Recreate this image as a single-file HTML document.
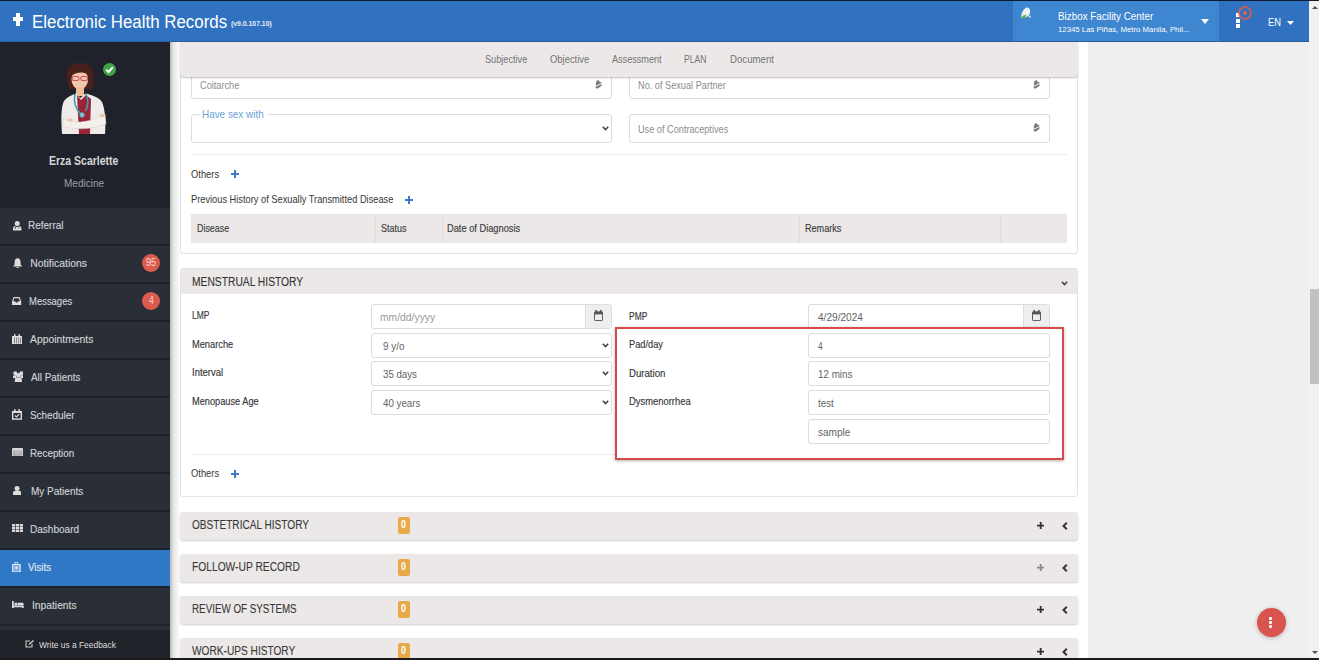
<!DOCTYPE html>
<html><head><meta charset="utf-8">
<style>
*{box-sizing:border-box;margin:0;padding:0}
html,body{width:1319px;height:660px;overflow:hidden;background:#efefef;font-family:"Liberation Sans",sans-serif}
.a{position:absolute}
.t{position:absolute;line-height:1;white-space:nowrap}
.gray{background:#ebe8e7}
.inp{position:absolute;background:#fff;border:1px solid #dcdcdc;border-radius:3px}
</style></head>
<body>
<div class="a" style="left:0;top:0;width:1319px;height:1px;background:#0b1b33"></div>
<div class="a" style="left:0;top:1px;width:1309px;height:41px;background:#3172c0"></div>
<div class="a" style="left:1013px;top:1px;width:206px;height:40px;background:#3f86d0"></div>
<div class="a" style="left:0;top:41px;width:1309px;height:1px;background:#285f9f"></div>
<svg class="a" style="left:13px;top:13px" width="10" height="13" viewBox="0 0 10 13"><path d="M3 0h4v4h3v4H7v5H3V8H0V4h3z" fill="#fff"/></svg>
<div class="t" style="left:31.8px;top:12.60px;font-size:18.12px;color:#fff;transform:scaleX(0.932);transform-origin:0 0;">Electronic Health Records</div>
<div class="t" style="left:231.2px;top:20.73px;font-size:6.67px;color:#e8eef8;font-weight:bold;transform:scaleX(1.029);transform-origin:0 0;">(v9.0.107.10)</div>
<svg class="a" style="left:1019.5px;top:6.9px" width="11" height="11" viewBox="0 0 11 11"><path d="M1 10.5 C1.5 6 3.5 1 7 0.5 C9.5 0.5 10.5 3 10 6 C9.5 8 8 9.5 5 10.8 Z" fill="#edf2f7"/><path d="M0.8 10.8 C2 8.6 4 7.6 6.2 8 C6.6 9 6 10.2 5 10.9 Z" fill="#62b544"/><circle cx="9.8" cy="9.6" r="1.1" fill="#d8ecf8"/></svg>
<div class="t" style="left:1057.7px;top:9.62px;font-size:11.74px;color:#fff;transform:scaleX(0.840);transform-origin:0 0;">Bizbox Facility Center</div>
<div class="t" style="left:1057.7px;top:26.10px;font-size:8.12px;color:#fff;transform:scaleX(0.962);transform-origin:0 0;">12345 Las Piñas, Metro Manila, Phil...</div>
<svg class="a" style="left:1201px;top:19px" width="8" height="5" viewBox="0 0 8 5"><path d="M0 0h8L4 5z" fill="#fff"/></svg>
<div class="a" style="left:1236px;top:13px;width:4px;height:4px;background:#fff"></div>
<div class="a" style="left:1236px;top:19px;width:4px;height:4px;background:#fff"></div>
<div class="a" style="left:1236px;top:24px;width:4px;height:4px;background:#fff"></div>
<div class="a" style="left:1238px;top:5.5px;width:14px;height:14px;border-radius:50%;border:2px solid rgba(222,90,80,0.85)"></div>
<div class="a" style="left:1243px;top:10.5px;width:4px;height:4px;border-radius:50%;background:#e8604a"></div>
<div class="t" style="left:1267.6px;top:18.25px;font-size:10.29px;color:#fff;transform:scaleX(0.902);transform-origin:0 0;">EN</div>
<svg class="a" style="left:1287px;top:21px" width="7" height="4" viewBox="0 0 7 4"><path d="M0 0h7L3.5 4z" fill="#fff"/></svg>
<div class="a" style="left:0;top:42px;width:170px;height:618px;background:#2a2f37"></div>
<div class="a" style="left:0;top:42px;width:170px;height:166px;background:#1f222a"></div>
<svg class="a" style="left:55px;top:58px" width="60" height="80" viewBox="0 0 60 80">
<path d="M12 20 C11 8 18 5 25.5 5 C33 5 39 9 39 20 C39 26 38 29 36 31 L15 31 C13 28 12 24 12 20z" fill="#4a201b"/>
<ellipse cx="24.8" cy="21.5" rx="8.3" ry="10" fill="#f2c6a6"/>
<path d="M16 18 C17 9 27 7 34 12 C36 14 37 17 36 20 C33 14 24 12 16 18z" fill="#4a201b"/>
<path d="M33 12 C37 15 38 24 36 31 L33 31 C34 25 34 18 33 12z" fill="#4a201b"/>
<rect x="17.3" y="18.5" width="6.6" height="4" rx="1.5" fill="none" stroke="#c9506a" stroke-width="1.1"/>
<rect x="25.9" y="18.5" width="6.6" height="4" rx="1.5" fill="none" stroke="#c9506a" stroke-width="1.1"/>
<rect x="21" y="30" width="8" height="8" fill="#edbd9c"/>
<path d="M7 76 C6 61 6 49 9 43 C12 39 17 37 21 35.5 L25.5 40 L30.5 35.5 C36 37 44 39 47 44 C50 51 51 63 50 76z" fill="#efebe8"/>
<path d="M22 37 L26 42 L31 37 L36 41 L35 76 L24 76z" fill="#9b2438"/>
<path d="M20 36 C18 44 21 52 26 56 M31 36 C34 42 33 48 30.5 53" fill="none" stroke="#3fa0a6" stroke-width="1.6"/>
<circle cx="27" cy="57" r="2.4" fill="#8cc3c9" stroke="#3fa0a6" stroke-width="0.8"/>
<path d="M8 60 C16 66 32 66 50 56 L51 66 C36 72 18 72 8 68z" fill="#f4f0ec" stroke="#cfcac6" stroke-width="0.5"/>
<ellipse cx="15" cy="62" rx="2.6" ry="1.8" fill="#f2c6a6"/>
<ellipse cx="47" cy="57.5" rx="2.6" ry="1.8" fill="#f2c6a6"/>
</svg>
<div class="a" style="left:103px;top:63px;width:13px;height:13px;border-radius:50%;background:#3fa54a"></div>
<svg class="a" style="left:103px;top:63px" width="13" height="13" viewBox="0 0 13 13"><path d="M3.2 6.8L5.5 9 9.8 4.3" fill="none" stroke="#fff" stroke-width="2"/></svg>
<div class="t" style="left:49.0px;top:154.07px;font-size:13.33px;color:#d8d8d8;font-weight:bold;transform:scaleX(0.787);transform-origin:0 0;">Erza Scarlette</div>
<div class="t" style="left:63.9px;top:177.81px;font-size:11.16px;color:#a0a0a0;transform:scaleX(0.898);transform-origin:0 0;">Medicine</div>
<div class="a" style="left:0;top:244px;width:170px;height:2px;background:#1e2127"></div>
<svg class="a" style="left:12.5px;top:220.5px" width="9" height="10" viewBox="0 0 9 10"><circle cx="4.2" cy="2.5" r="2.5" fill="#ddd"/><path d="M0 9.5V7.3C0 5.8 1 5 2.2 4.9L4.2 6.2 6.2 4.9C7.4 5 8.4 5.8 8.4 7.3V9.5z" fill="#ddd"/><path d="M2.4 5.2V8M6 5.2V7.2" stroke="#2a2f37" stroke-width="0.7"/></svg>
<div class="t" style="left:27.9px;top:220.83px;font-size:10.43px;color:#d2d5d8;transform:scaleX(0.957);transform-origin:0 0;-webkit-text-stroke:0.12px #d2d5d8;">Referral</div>
<div class="a" style="left:0;top:282px;width:170px;height:2px;background:#1e2127"></div>
<svg class="a" style="left:13px;top:257.8px" width="9.2" height="10" viewBox="0 0 9.2 10"><path d="M4.6 0.3C6.8 0.3 7.6 2.2 7.6 4.2V6.6L9.2 8.6H0L1.6 6.6V4.2C1.6 2.2 2.4 0.3 4.6 0.3z" fill="#ddd"/><path d="M3.4 9h2.4C5.8 9.6 5.3 10 4.6 10S3.4 9.6 3.4 9z" fill="#ddd"/></svg>
<div class="t" style="left:30.3px;top:258.83px;font-size:10.43px;color:#d2d5d8;-webkit-text-stroke:0.12px #d2d5d8;">Notifications</div>
<div class="a" style="left:142px;top:254px;width:18px;height:18px;border-radius:50%;background:#dd5a4e"></div>
<div class="t" style="left:145.6px;top:258.38px;font-size:10.14px;color:#f6dcd8;transform:scaleX(0.904);transform-origin:0 0;">95</div>
<div class="a" style="left:0;top:320px;width:170px;height:2px;background:#1e2127"></div>
<svg class="a" style="left:12.4px;top:296.8px" width="9.2" height="8" viewBox="0 0 9.2 8"><path d="M1.6 0h6L9.2 4.5V8H0V4.5z" fill="#ddd"/><path d="M2.4 1.2h4.4L8 4.3H6L5.4 5.4H3.8L3.2 4.3H1.2z" fill="#2a2f37"/></svg>
<div class="t" style="left:28.9px;top:296.83px;font-size:10.43px;color:#d2d5d8;transform:scaleX(0.908);transform-origin:0 0;-webkit-text-stroke:0.12px #d2d5d8;">Messages</div>
<div class="a" style="left:142px;top:292px;width:18px;height:18px;border-radius:50%;background:#dd5a4e"></div>
<div class="t" style="left:148.6px;top:296.38px;font-size:10.14px;color:#f6dcd8;transform:scaleX(0.851);transform-origin:0 0;">4</div>
<div class="a" style="left:0;top:358px;width:170px;height:2px;background:#1e2127"></div>
<svg class="a" style="left:12.2px;top:333.5px" width="10" height="10.5" viewBox="0 0 10 10.5"><path d="M0 2h10v8.5H0z" fill="#ddd"/><path d="M2 0.2h1.6V2.5H2zM6.4 0.2H8V2.5H6.4z" fill="#ddd"/><path d="M2 3.6h0.9v6H2zM4 3.6h0.9v6H4zM6 3.6h0.9v6H6zM8 3.6h0.9v6H8z" fill="#2a2f37" opacity="0.55"/></svg>
<div class="t" style="left:29.6px;top:334.83px;font-size:10.43px;color:#d2d5d8;transform:scaleX(0.994);transform-origin:0 0;-webkit-text-stroke:0.12px #d2d5d8;">Appointments</div>
<div class="a" style="left:0;top:396px;width:170px;height:2px;background:#1e2127"></div>
<svg class="a" style="left:12.5px;top:370.8px" width="10.7" height="11" viewBox="0 0 10.7 11"><circle cx="2.3" cy="2.3" r="2" fill="#ddd"/><circle cx="8.4" cy="2.3" r="2" fill="#ddd"/><path d="M0 7V5.5C0 4.6 0.8 4.2 1.6 4.2H3.2L3.5 7zM10.7 7V5.5C10.7 4.6 9.9 4.2 9.1 4.2H7.5L7.2 7z" fill="#ddd"/><circle cx="5.35" cy="4.3" r="2.2" fill="#ddd"/><path d="M1.8 11V8.7C1.8 7.4 2.8 6.6 4 6.6H6.7C7.9 6.6 8.9 7.4 8.9 8.7V11z" fill="#ddd"/></svg>
<div class="t" style="left:30.7px;top:372.83px;font-size:10.43px;color:#d2d5d8;transform:scaleX(0.946);transform-origin:0 0;-webkit-text-stroke:0.12px #d2d5d8;">All Patients</div>
<div class="a" style="left:0;top:434px;width:170px;height:2px;background:#1e2127"></div>
<svg class="a" style="left:12.2px;top:409px" width="10" height="10.8" viewBox="0 0 10 10.8"><path d="M0 2h10v8.8H0z" fill="#ddd"/><path d="M2 0.2h1.6V2.5H2zM6.4 0.2H8V2.5H6.4z" fill="#ddd"/><path d="M1.4 4h7.2v5.4H1.4z" fill="#2a2f37"/><path d="M3 6.5L4.5 8 7.2 5.2" fill="none" stroke="#ddd" stroke-width="1.1"/></svg>
<div class="t" style="left:30.0px;top:410.83px;font-size:10.43px;color:#d2d5d8;transform:scaleX(0.949);transform-origin:0 0;-webkit-text-stroke:0.12px #d2d5d8;">Scheduler</div>
<div class="a" style="left:0;top:472px;width:170px;height:2px;background:#1e2127"></div>
<svg class="a" style="left:12.2px;top:447.9px" width="11" height="8.6" viewBox="0 0 11 8.6"><rect x="0" y="0" width="11" height="8.6" rx="1" fill="#d6d6d6"/><path d="M1.2 2.6h8.6v5H1.2z" fill="#2a2f37" opacity="0.35"/><path d="M2.8 3.5h6v0.9h-6zM2.8 5.4h6v0.9h-6z" fill="#ddd"/><path d="M1.6 3.5h0.7v0.9H1.6zM1.6 5.4h0.7v0.9H1.6z" fill="#ddd"/></svg>
<div class="t" style="left:30.0px;top:448.83px;font-size:10.43px;color:#d2d5d8;transform:scaleX(0.941);transform-origin:0 0;-webkit-text-stroke:0.12px #d2d5d8;">Reception</div>
<div class="a" style="left:0;top:510px;width:170px;height:2px;background:#1e2127"></div>
<svg class="a" style="left:12.5px;top:485.9px" width="8.2" height="9.2" viewBox="0 0 8.2 9.2"><circle cx="4.1" cy="2.5" r="2.5" fill="#ddd"/><path d="M0 9.2V7C0 5.6 1 4.8 2.3 4.8H5.9C7.2 4.8 8.2 5.6 8.2 7V9.2z" fill="#ddd"/></svg>
<div class="t" style="left:30.6px;top:486.83px;font-size:10.43px;color:#d2d5d8;transform:scaleX(0.959);transform-origin:0 0;-webkit-text-stroke:0.12px #d2d5d8;">My Patients</div>
<div class="a" style="left:0;top:548px;width:170px;height:2px;background:#1e2127"></div>
<svg class="a" style="left:12.2px;top:523.9px" width="11" height="8.6" viewBox="0 0 11 8.6"><path d="M0 0h3.2v2.5H0zM3.9 0h3.2v2.5H3.9zM7.8 0h3.2v2.5H7.8zM0 3.05h3.2v2.5H0zM3.9 3.05h3.2v2.5H3.9zM7.8 3.05h3.2v2.5H7.8zM0 6.1h3.2v2.5H0zM3.9 6.1h3.2v2.5H3.9zM7.8 6.1h3.2v2.5H7.8z" fill="#ddd"/></svg>
<div class="t" style="left:30.3px;top:524.83px;font-size:10.43px;color:#d2d5d8;transform:scaleX(0.962);transform-origin:0 0;-webkit-text-stroke:0.12px #d2d5d8;">Dashboard</div>
<div class="a" style="left:0;top:550px;width:170px;height:36px;background:#2f78c5"></div>
<div class="a" style="left:0;top:586px;width:170px;height:2px;background:#1e2127"></div>
<svg class="a" style="left:12.2px;top:561.6px" width="8.8" height="10.3" viewBox="0 0 8.8 10.3"><path d="M2.6 0h3.6v2H8.8V10.3H0V2h2.6z" fill="#cfe0f3"/><path d="M3.6 0.8h1.6v1.2H3.6z" fill="#2f78c5"/><path d="M1.3 3.2h6.2v6H1.3z" fill="#2f78c5" opacity="0.55"/><path d="M3.8 4h1.2v1.2h1.2v1.2H5v1.2H3.8V6.4H2.6V5.2h1.2z" fill="#cfe0f3"/></svg>
<div class="t" style="left:28.0px;top:562.83px;font-size:10.43px;color:#e3eaf4;transform:scaleX(0.930);transform-origin:0 0;-webkit-text-stroke:0.12px #e3eaf4;">Visits</div>
<div class="a" style="left:0;top:624px;width:170px;height:2px;background:#1e2127"></div>
<svg class="a" style="left:12.2px;top:600.8px" width="11.7" height="7.7" viewBox="0 0 11.7 7.7"><path d="M0 0h1.7v4.6h10v3.1H10V6.3H1.7v1.4H0z" fill="#ddd"/><path d="M2.5 1.8h2.6v2.4H2.5zM5.6 1.8h4.6C11 1.8 11.7 2.5 11.7 3.3V4.2H5.6z" fill="#ddd"/></svg>
<div class="t" style="left:31.8px;top:600.83px;font-size:10.43px;color:#d2d5d8;transform:scaleX(0.986);transform-origin:0 0;-webkit-text-stroke:0.12px #d2d5d8;">Inpatients</div>
<div class="a" style="left:0;top:626px;width:170px;height:4px;background:#2c3139"></div>
<div class="a" style="left:0;top:630px;width:170px;height:28px;background:#20232a"></div>
<svg class="a" style="left:25px;top:640px" width="9" height="8" viewBox="0 0 9 8"><path d="M5 1H1v6h6V4" fill="none" stroke="#ccc" stroke-width="1.1"/><path d="M3.5 5l0.5-1.5L8 0l1 1-4 3.5z" fill="#ccc"/></svg>
<div class="t" style="left:38.8px;top:640.09px;font-size:9.42px;color:#dcdcdc;transform:scaleX(0.893);transform-origin:0 0;">Write us a Feedback</div>
<div class="a" style="left:170px;top:42px;width:918px;height:616px;background:#fff"></div>
<div class="a" style="left:180px;top:42px;width:898px;height:212px;border:1px solid #e3e3e3;border-top:none;border-radius:0 0 3px 3px;background:#fff"></div>
<div class="inp" style="left:191px;top:70px;width:421px;height:29px"></div>
<div class="t" style="left:199.7px;top:80.73px;font-size:10.43px;color:#8c8c8c;transform:scaleX(0.882);transform-origin:0 0;">Coitarche</div>
<svg class="a" style="left:594.6px;top:79.8px" width="7" height="9" viewBox="0 0 7 9"><path d="M2.3 0.4C3.5 0 4.5 0.7 4.6 1.8L6.6 2.4 6.4 6.1 2.4 8.8 0.5 7.7 0.9 4.3C1 2.4 1.3 0.8 2.3 0.4z" fill="#7c7c7c"/><path d="M0.2 6.5L6.9 3.3" stroke="#fff" stroke-width="0.9"/></svg>
<div class="inp" style="left:629px;top:70px;width:421px;height:29px"></div>
<div class="t" style="left:637.7px;top:81.05px;font-size:10.29px;color:#8c8c8c;transform:scaleX(0.893);transform-origin:0 0;">No. of Sexual Partner</div>
<svg class="a" style="left:1032.5px;top:79.8px" width="7" height="9" viewBox="0 0 7 9"><path d="M2.3 0.4C3.5 0 4.5 0.7 4.6 1.8L6.6 2.4 6.4 6.1 2.4 8.8 0.5 7.7 0.9 4.3C1 2.4 1.3 0.8 2.3 0.4z" fill="#7c7c7c"/><path d="M0.2 6.5L6.9 3.3" stroke="#fff" stroke-width="0.9"/></svg>
<div class="inp" style="left:191px;top:114px;width:421px;height:29px"></div>
<div class="a" style="left:200px;top:110px;width:68px;height:6px;background:#fff"></div>
<div class="t" style="left:202.4px;top:109.04px;font-size:11.01px;color:#6aa0da;transform:scaleX(0.901);transform-origin:0 0;">Have sex with</div>
<svg class="a" style="left:602px;top:126px" width="7" height="5" viewBox="0 0 7 5"><path d="M0.8 0.8L3.5 3.6 6.2 0.8" fill="none" stroke="#444" stroke-width="1.6"/></svg>
<div class="inp" style="left:629px;top:114px;width:421px;height:29px"></div>
<div class="t" style="left:637.7px;top:124.73px;font-size:10.43px;color:#8c8c8c;transform:scaleX(0.880);transform-origin:0 0;">Use of Contraceptives</div>
<svg class="a" style="left:1032.5px;top:122.9px" width="7" height="9" viewBox="0 0 7 9"><path d="M2.3 0.4C3.5 0 4.5 0.7 4.6 1.8L6.6 2.4 6.4 6.1 2.4 8.8 0.5 7.7 0.9 4.3C1 2.4 1.3 0.8 2.3 0.4z" fill="#7c7c7c"/><path d="M0.2 6.5L6.9 3.3" stroke="#fff" stroke-width="0.9"/></svg>
<div class="a" style="left:191px;top:154px;width:876px;height:1px;background:#ececec"></div>
<div class="t" style="left:191.4px;top:168.91px;font-size:10.58px;color:#363636;transform:scaleX(0.885);transform-origin:0 0;">Others</div>
<svg class="a" style="left:231px;top:170px" width="8" height="8" viewBox="0 0 8 8"><path d="M3 0h2v3h3v2H5v3H3V5H0V3h3z" fill="#3b7bc8"/></svg>
<div class="t" style="left:191.4px;top:195.33px;font-size:10.43px;color:#363636;transform:scaleX(0.889);transform-origin:0 0;">Previous History of Sexually Transmitted Disease</div>
<svg class="a" style="left:405px;top:196px" width="8" height="8" viewBox="0 0 8 8"><path d="M3 0h2v3h3v2H5v3H3V5H0V3h3z" fill="#3b7bc8"/></svg>
<div class="a gray" style="left:191px;top:214px;width:876px;height:29px"></div>
<div class="a" style="left:375px;top:214px;width:1px;height:29px;background:#e0dcdb"></div>
<div class="a" style="left:442px;top:214px;width:1px;height:29px;background:#e0dcdb"></div>
<div class="a" style="left:799px;top:214px;width:1px;height:29px;background:#e0dcdb"></div>
<div class="a" style="left:1000px;top:214px;width:1px;height:29px;background:#e0dcdb"></div>
<div class="t" style="left:196.8px;top:224.43px;font-size:10.43px;color:#3c3c3c;transform:scaleX(0.854);transform-origin:0 0;-webkit-text-stroke:0.15px #3c3c3c;">Disease</div>
<div class="t" style="left:380.5px;top:224.43px;font-size:10.43px;color:#3c3c3c;transform:scaleX(0.859);transform-origin:0 0;-webkit-text-stroke:0.15px #3c3c3c;">Status</div>
<div class="t" style="left:447.3px;top:224.43px;font-size:10.43px;color:#3c3c3c;transform:scaleX(0.889);transform-origin:0 0;-webkit-text-stroke:0.15px #3c3c3c;">Date of Diagnosis</div>
<div class="t" style="left:804.5px;top:224.43px;font-size:10.43px;color:#3c3c3c;transform:scaleX(0.872);transform-origin:0 0;-webkit-text-stroke:0.15px #3c3c3c;">Remarks</div>
<div class="a gray" style="left:180px;top:42px;width:898px;height:35px;border-radius:0 0 4px 4px;box-shadow:0 1px 2px rgba(0,0,0,0.25)"></div>
<div class="t" style="left:484.5px;top:55.13px;font-size:10.43px;color:#747474;transform:scaleX(0.879);transform-origin:0 0;">Subjective</div>
<div class="t" style="left:549.7px;top:55.13px;font-size:10.43px;color:#747474;transform:scaleX(0.903);transform-origin:0 0;">Objective</div>
<div class="t" style="left:611.8px;top:55.13px;font-size:10.43px;color:#747474;transform:scaleX(0.873);transform-origin:0 0;">Assessment</div>
<div class="t" style="left:684.0px;top:55.13px;font-size:10.43px;color:#747474;transform:scaleX(0.825);transform-origin:0 0;">PLAN</div>
<div class="t" style="left:730.0px;top:55.13px;font-size:10.43px;color:#747474;transform:scaleX(0.925);transform-origin:0 0;">Document</div>
<div class="a" style="left:180px;top:268px;width:898px;height:229px;border:1px solid #e3e3e3;border-radius:3px;background:#fff;overflow:hidden"><div class="gray" style="height:25px"></div></div>
<div class="t" style="left:191.7px;top:275.58px;font-size:12.61px;color:#333;transform:scaleX(0.815);transform-origin:0 0;-webkit-text-stroke:0.1px #333;">MENSTRUAL HISTORY</div>
<svg class="a" style="left:1061px;top:281px" width="7" height="5" viewBox="0 0 7 5"><path d="M0.8 0.8L3.5 3.6 6.2 0.8" fill="none" stroke="#444" stroke-width="1.6"/></svg>
<div class="t" style="left:191.5px;top:310.41px;font-size:10.58px;color:#363636;transform:scaleX(0.804);transform-origin:0 0;-webkit-text-stroke:0.15px #363636;">LMP</div>
<div class="inp" style="left:371px;top:304px;width:241px;height:25px"></div>
<div class="a" style="left:585px;top:305px;width:26px;height:23px;border-left:1px solid #ddd;border-radius:0 3px 3px 0;background:#eeeeee"></div>
<svg class="a" style="left:594px;top:310.2px" width="9" height="11" viewBox="0 0 9 11"><rect x="1.4" y="0" width="1.6" height="2.6" fill="#555"/><rect x="6" y="0" width="1.6" height="2.6" fill="#555"/><rect x="0.5" y="1.9" width="8" height="8.6" rx="0.6" fill="none" stroke="#5e5e5e" stroke-width="1"/><rect x="0.3" y="1.8" width="8.4" height="2.6" fill="#555"/></svg>
<div class="t" style="left:380.4px;top:311.94px;font-size:11.01px;color:#9a9a9a;transform:scaleX(0.940);transform-origin:0 0;">mm/dd/yyyy</div>
<div class="t" style="left:191.5px;top:338.61px;font-size:10.58px;color:#363636;transform:scaleX(0.876);transform-origin:0 0;-webkit-text-stroke:0.15px #363636;">Menarche</div>
<div class="inp" style="left:371px;top:333px;width:241px;height:25px"></div>
<div class="t" style="left:382.8px;top:340.91px;font-size:10.58px;color:#636363;transform:scaleX(0.942);transform-origin:0 0;">9 y/o</div>
<svg class="a" style="left:602px;top:343px" width="7" height="5" viewBox="0 0 7 5"><path d="M0.8 0.8L3.5 3.6 6.2 0.8" fill="none" stroke="#444" stroke-width="1.6"/></svg>
<div class="t" style="left:191.5px;top:367.21px;font-size:10.58px;color:#363636;transform:scaleX(0.896);transform-origin:0 0;-webkit-text-stroke:0.15px #363636;">Interval</div>
<div class="inp" style="left:371px;top:361px;width:241px;height:25px"></div>
<div class="t" style="left:382.8px;top:368.91px;font-size:10.58px;color:#636363;transform:scaleX(0.915);transform-origin:0 0;">35 days</div>
<svg class="a" style="left:602px;top:371px" width="7" height="5" viewBox="0 0 7 5"><path d="M0.8 0.8L3.5 3.6 6.2 0.8" fill="none" stroke="#444" stroke-width="1.6"/></svg>
<div class="t" style="left:191.5px;top:396.01px;font-size:10.58px;color:#363636;transform:scaleX(0.872);transform-origin:0 0;-webkit-text-stroke:0.15px #363636;">Menopause Age</div>
<div class="inp" style="left:371px;top:390px;width:241px;height:25px"></div>
<div class="t" style="left:382.8px;top:397.91px;font-size:10.58px;color:#636363;transform:scaleX(0.922);transform-origin:0 0;">40 years</div>
<svg class="a" style="left:602px;top:400px" width="7" height="5" viewBox="0 0 7 5"><path d="M0.8 0.8L3.5 3.6 6.2 0.8" fill="none" stroke="#444" stroke-width="1.6"/></svg>
<div class="t" style="left:629.3px;top:310.61px;font-size:10.58px;color:#363636;transform:scaleX(0.803);transform-origin:0 0;-webkit-text-stroke:0.15px #363636;">PMP</div>
<div class="inp" style="left:808px;top:304px;width:242px;height:25px"></div>
<div class="t" style="left:818.0px;top:311.91px;font-size:10.58px;color:#636363;transform:scaleX(0.956);transform-origin:0 0;">4/29/2024</div>
<div class="a" style="left:1023px;top:305px;width:26px;height:23px;border-left:1px solid #ddd;border-radius:0 3px 3px 0;background:#eeeeee"></div>
<svg class="a" style="left:1032px;top:310.2px" width="9" height="11" viewBox="0 0 9 11"><rect x="1.4" y="0" width="1.6" height="2.6" fill="#555"/><rect x="6" y="0" width="1.6" height="2.6" fill="#555"/><rect x="0.5" y="1.9" width="8" height="8.6" rx="0.6" fill="none" stroke="#5e5e5e" stroke-width="1"/><rect x="0.3" y="1.8" width="8.4" height="2.6" fill="#555"/></svg>
<div class="t" style="left:629.3px;top:338.91px;font-size:10.58px;color:#363636;transform:scaleX(0.873);transform-origin:0 0;-webkit-text-stroke:0.15px #363636;">Pad/day</div>
<div class="inp" style="left:808px;top:333px;width:242px;height:25px"></div>
<div class="t" style="left:818.0px;top:340.91px;font-size:10.58px;color:#636363;transform:scaleX(0.799);transform-origin:0 0;">4</div>
<div class="t" style="left:629.3px;top:367.61px;font-size:10.58px;color:#363636;transform:scaleX(0.910);transform-origin:0 0;-webkit-text-stroke:0.15px #363636;">Duration</div>
<div class="inp" style="left:808px;top:361px;width:242px;height:25px"></div>
<div class="t" style="left:818.0px;top:368.91px;font-size:10.58px;color:#636363;transform:scaleX(0.929);transform-origin:0 0;">12 mins</div>
<div class="t" style="left:629.3px;top:395.91px;font-size:10.58px;color:#363636;transform:scaleX(0.889);transform-origin:0 0;-webkit-text-stroke:0.15px #363636;">Dysmenorrhea</div>
<div class="inp" style="left:808px;top:390px;width:242px;height:25px"></div>
<div class="t" style="left:818.0px;top:397.91px;font-size:10.58px;color:#636363;transform:scaleX(0.927);transform-origin:0 0;">test</div>
<div class="inp" style="left:808px;top:419px;width:242px;height:25px"></div>
<div class="t" style="left:818.0px;top:426.91px;font-size:10.58px;color:#636363;transform:scaleX(0.947);transform-origin:0 0;">sample</div>
<div class="a" style="left:191px;top:454px;width:424px;height:1px;background:#ececec"></div>
<div class="t" style="left:191.4px;top:468.41px;font-size:10.58px;color:#363636;transform:scaleX(0.885);transform-origin:0 0;">Others</div>
<svg class="a" style="left:231px;top:470px" width="8" height="8" viewBox="0 0 8 8"><path d="M3 0h2v3h3v2H5v3H3V5H0V3h3z" fill="#3b7bc8"/></svg>
<div class="a" style="left:615px;top:327px;width:449px;height:133px;border:2px solid #d44b4b;box-shadow:0 1px 3px rgba(0,0,0,0.3)"></div>
<div class="a gray" style="left:180px;top:512px;width:898px;height:28px;border-radius:3px;box-shadow:0 1px 2px rgba(0,0,0,0.2)"></div>
<div class="t" style="left:191.7px;top:518.78px;font-size:12.61px;color:#383838;transform:scaleX(0.800);transform-origin:0 0;-webkit-text-stroke:0.1px #383838;">OBSTETRICAL HISTORY</div>
<div class="a" style="left:398px;top:516.5px;width:12px;height:17px;background:#e8a94a;border-radius:2px"></div>
<div class="t" style="left:401.1px;top:520.38px;font-size:10.14px;color:#fff;font-weight:bold;transform:scaleX(0.886);transform-origin:0 0;">0</div>
<svg class="a" style="left:1036.8px;top:522px" width="7.4" height="7.4" viewBox="0 0 8 8"><path d="M3 0h2v3h3v2H5v3H3V5H0V3h3z" fill="#333"/></svg>
<svg class="a" style="left:1062px;top:522px" width="6" height="8" viewBox="0 0 6 8"><path d="M4.8 0.8L1.5 4 4.8 7.2" fill="none" stroke="#333" stroke-width="2"/></svg>
<div class="a gray" style="left:180px;top:554px;width:898px;height:28px;border-radius:3px;box-shadow:0 1px 2px rgba(0,0,0,0.2)"></div>
<div class="t" style="left:191.7px;top:560.78px;font-size:12.61px;color:#383838;transform:scaleX(0.813);transform-origin:0 0;-webkit-text-stroke:0.1px #383838;">FOLLOW-UP RECORD</div>
<div class="a" style="left:398px;top:558.5px;width:12px;height:17px;background:#e8a94a;border-radius:2px"></div>
<div class="t" style="left:401.1px;top:562.38px;font-size:10.14px;color:#fff;font-weight:bold;transform:scaleX(0.886);transform-origin:0 0;">0</div>
<svg class="a" style="left:1036.8px;top:564px" width="7.4" height="7.4" viewBox="0 0 8 8"><path d="M3 0h2v3h3v2H5v3H3V5H0V3h3z" fill="#888"/></svg>
<svg class="a" style="left:1062px;top:564px" width="6" height="8" viewBox="0 0 6 8"><path d="M4.8 0.8L1.5 4 4.8 7.2" fill="none" stroke="#333" stroke-width="2"/></svg>
<div class="a gray" style="left:180px;top:596px;width:898px;height:28px;border-radius:3px;box-shadow:0 1px 2px rgba(0,0,0,0.2)"></div>
<div class="t" style="left:191.7px;top:602.78px;font-size:12.61px;color:#383838;transform:scaleX(0.778);transform-origin:0 0;-webkit-text-stroke:0.1px #383838;">REVIEW OF SYSTEMS</div>
<div class="a" style="left:398px;top:600.5px;width:12px;height:17px;background:#e8a94a;border-radius:2px"></div>
<div class="t" style="left:401.1px;top:604.38px;font-size:10.14px;color:#fff;font-weight:bold;transform:scaleX(0.886);transform-origin:0 0;">0</div>
<svg class="a" style="left:1036.8px;top:606px" width="7.4" height="7.4" viewBox="0 0 8 8"><path d="M3 0h2v3h3v2H5v3H3V5H0V3h3z" fill="#333"/></svg>
<svg class="a" style="left:1062px;top:606px" width="6" height="8" viewBox="0 0 6 8"><path d="M4.8 0.8L1.5 4 4.8 7.2" fill="none" stroke="#333" stroke-width="2"/></svg>
<div class="a gray" style="left:180px;top:638px;width:898px;height:28px;border-radius:3px;box-shadow:0 1px 2px rgba(0,0,0,0.2)"></div>
<div class="t" style="left:191.7px;top:644.78px;font-size:12.61px;color:#383838;transform:scaleX(0.804);transform-origin:0 0;-webkit-text-stroke:0.1px #383838;">WORK-UPS HISTORY</div>
<div class="a" style="left:398px;top:642.5px;width:12px;height:17px;background:#e8a94a;border-radius:2px"></div>
<div class="t" style="left:401.1px;top:646.38px;font-size:10.14px;color:#fff;font-weight:bold;transform:scaleX(0.886);transform-origin:0 0;">0</div>
<svg class="a" style="left:1036.8px;top:648px" width="7.4" height="7.4" viewBox="0 0 8 8"><path d="M3 0h2v3h3v2H5v3H3V5H0V3h3z" fill="#333"/></svg>
<svg class="a" style="left:1062px;top:648px" width="6" height="8" viewBox="0 0 6 8"><path d="M4.8 0.8L1.5 4 4.8 7.2" fill="none" stroke="#333" stroke-width="2"/></svg>
<div class="a" style="left:170px;top:42px;width:9px;height:616px;background:linear-gradient(90deg,#b8babd,#e6e6e6 40%,#fafafa)"></div>
<div class="a" style="left:1257px;top:608px;width:29px;height:29px;border-radius:50%;background:#d9534f;box-shadow:0 1px 4px rgba(0,0,0,0.25)"></div>
<div class="a" style="left:1269px;top:617px;width:3px;height:3px;border-radius:1px;background:#fff"></div>
<div class="a" style="left:1269px;top:621px;width:3px;height:3px;border-radius:1px;background:#fff"></div>
<div class="a" style="left:1269px;top:625px;width:3px;height:3px;border-radius:1px;background:#fff"></div>
<div class="a" style="left:1309px;top:1px;width:10px;height:657px;background:#f1f1f1"></div>
<svg class="a" style="left:1312px;top:6px" width="6" height="3" viewBox="0 0 6 3"><path d="M0 3h6L3 0z" fill="#505050"/></svg>
<svg class="a" style="left:1312px;top:651px" width="6" height="3" viewBox="0 0 6 3"><path d="M0 0h6L3 3z" fill="#505050"/></svg>
<div class="a" style="left:1310px;top:289px;width:9px;height:95px;background:#c1c1c1"></div>
<div class="a" style="left:0;top:658px;width:1319px;height:2px;background:#1a1a1a"></div>
</body></html>
